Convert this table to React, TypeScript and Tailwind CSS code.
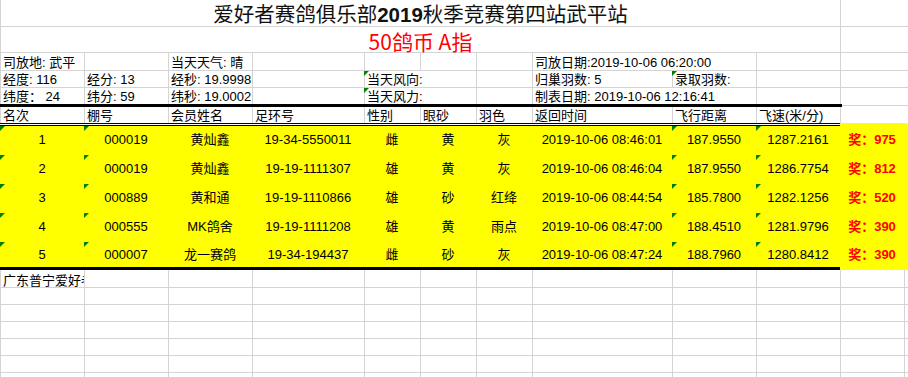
import React from "react";

const WS = [
  "w-[84px]",
  "w-[84px]",
  "w-[84px]",
  "w-[112px]",
  "w-[56px]",
  "w-[56px]",
  "w-[56px]",
  "w-[140px]",
  "w-[84px]",
  "w-[84px]",
  "w-[64px]",
];

function Tri({ onLine = false }: { onLine?: boolean }) {
  return (
    <span
      className={`absolute top-0 ${onLine ? "left-[-1px]" : "left-0"} h-0 w-0 border-t-[5px] border-r-[5px] border-t-[#008000] border-r-transparent`}
    />
  );
}

type RowProps = {
  h: string;
  texts?: Record<number, React.ReactNode>;
  noLine?: number[];
  tri?: number[];
  line904?: boolean;
  clip?: number[];
  pad?: string;
};

function GridRow({ h, texts = {}, noLine = [], tri = [], line904 = false, clip = [], pad = "pt-[1px]" }: RowProps) {
  return (
    <div className={`flex ${h}`}>
      {WS.map((w, i) => (
        <div
          key={i}
          className={`relative shrink-0 ${w} ${
            noLine.includes(i) ? "pl-[3px]" : "border-l border-[#d4d4d4] pl-[2px]"
          } ${clip.includes(i) ? "overflow-hidden" : ""} ${pad} flex items-center whitespace-nowrap`}
        >
          {tri.includes(i) && <Tri onLine={!noLine.includes(i)} />}
          {texts[i]}
        </div>
      ))}
      <div className={`flex-1 ${line904 ? "border-l border-[#d4d4d4]" : ""}`} />
    </div>
  );
}

const HEAD = ["名次", "棚号", "会员姓名", "足环号", "性别", "眼砂", "羽色", "返回时间", "飞行距离", "飞速(米/分)"];

const ROWS = [
  ["1", "000019", "黄灿鑫", "19-34-5550011", "雌", "黄", "灰", "2019-10-06 08:46:01", "187.9550", "1287.2161", "975"],
  ["2", "000019", "黄灿鑫", "19-19-1111307", "雄", "黄", "灰", "2019-10-06 08:46:04", "187.9550", "1286.7754", "812"],
  ["3", "000889", "黄和通", "19-19-1110866", "雄", "砂", "红绛", "2019-10-06 08:44:54", "185.7800", "1282.1256", "520"],
  ["4", "000555", "MK鸽舍", "19-19-1111208", "雄", "黄", "雨点", "2019-10-06 08:47:00", "188.4510", "1281.9796", "390"],
  ["5", "000007", "龙一赛鸽", "19-34-194437", "雌", "砂", "灰", "2019-10-06 08:47:24", "188.7960", "1280.8412", "390"],
];

export default function App() {
  return (
    <div className="w-[908px] h-[377px] overflow-hidden bg-white text-black text-[13px] leading-[15px] font-['Liberation_Sans','Noto_Sans_CJK_SC',sans-serif]">
      {/* title row */}
      <div className="flex h-[27px] border-b border-[#d4d4d4]">
        <div className="w-[840px] shrink-0 border-l border-[#d4d4d4] flex items-center justify-center pt-[4px] text-[20.5px] leading-none whitespace-nowrap text-[#111]">
          爱好者赛鸽俱乐部<span className="font-bold">2019</span>秋季竞赛第四站武平站
        </div>
        <div className="w-[64px] shrink-0 border-l border-[#d4d4d4]" />
        <div className="flex-1" />
      </div>
      {/* subtitle row */}
      <div className="flex h-[26px] border-b border-[#d4d4d4]">
        <div className="w-[840px] shrink-0 border-l border-[#d4d4d4] flex items-center justify-center pt-[4px] text-[21px] leading-none whitespace-nowrap text-[#ff0000] font-['Noto_Sans_CJK_SC',sans-serif]">
          50鸽币 A指
        </div>
        <div className="w-[64px] shrink-0 border-l border-[#d4d4d4]" />
        <div className="flex-1" />
      </div>
      {/* info rows */}
      <GridRow
        h="h-[18px] border-b border-[#d4d4d4]"
        texts={{ 0: "司放地: 武平", 2: "当天天气: 晴", 7: "司放日期:2019-10-06 06:20:00" }}
        noLine={[8]}
      />
      <GridRow
        h="h-[17px] border-b border-[#d4d4d4]"
        texts={{ 0: "经度: 116", 1: "经分: 13", 2: "经秒: 19.9998", 4: "当天风向:", 7: "归巢羽数: 5", 8: "录取羽数:" }}
        noLine={[5]}
        tri={[4, 8]}
      />
      <GridRow
        h="h-[16px]"
        texts={{ 0: "纬度： 24", 1: "纬分: 59", 2: "纬秒: 19.0002", 4: "当天风力:", 7: "制表日期: 2019-10-06 12:16:41" }}
        noLine={[5, 8]}
        tri={[4]}
      />
      <div className="flex h-[3px]">
        <div className="w-[842px] shrink-0 bg-black" />
        <div className="flex-1 h-[2px] border-b border-[#d4d4d4]" />
      </div>

      {/* results table */}
      <div className="flex">
        <div className="w-[840px] shrink-0">
          <div className="flex h-[19px] border-b-[3px] border-double border-black">
            {HEAD.map((t, j) => (
              <div
                key={j}
                className={`shrink-0 ${WS[j]} border-l border-[#d4d4d4] pl-[2px] flex items-end whitespace-nowrap`}
              >
                {t}
              </div>
            ))}
          </div>
          <div className="bg-[#ffff00] border-b-[3px] border-black">
            {ROWS.map((r, i) => (
              <div key={i} className={`flex ${i === 4 ? "h-[25px]" : "h-[29px] pb-[3px]"}`}>
                {r.slice(0, 10).map((t, j) => (
                  <div
                    key={j}
                    className={`relative shrink-0 ${WS[j]} flex items-center justify-center whitespace-nowrap`}
                  >
                    {(j === 0 || j === 1 || j === 8 || j === 9) && <Tri />}
                    {t}
                  </div>
                ))}
              </div>
            ))}
          </div>
        </div>
        <div className="flex-1 flex flex-col">
          <div className="h-[16px] border-l border-[#d4d4d4]" />
          <div className="h-[147px] bg-[#ffff00] pt-[3px]">
            {ROWS.map((r, i) => (
              <div
                key={i}
                className={`w-[64px] flex items-center justify-center whitespace-nowrap font-bold text-[#ff0000] ${
                  i === 4 ? "h-[25px]" : "h-[29px] pb-[3px]"
                }`}
              >
                奖：{r[10]}
              </div>
            ))}
          </div>
        </div>
      </div>

      {/* empty grid below */}
      <GridRow
        h="h-[18px] border-b border-[#d4d4d4]"
        texts={{ 0: "广东普宁爱好者赛鸽俱乐部" }}
        clip={[0]}
        line904
        pad="pt-[3px]"
      />
      <GridRow h="h-[17px] border-b border-[#d4d4d4]" line904 />
      <GridRow h="h-[17px] border-b border-[#d4d4d4]" line904 />
      <GridRow h="h-[17px] border-b border-[#d4d4d4]" line904 />
      <GridRow h="h-[17px] border-b border-[#d4d4d4]" line904 />
      <GridRow h="h-[17px] border-b border-[#d4d4d4]" line904 />
      <GridRow h="h-[17px]" line904 />
    </div>
  );
}
